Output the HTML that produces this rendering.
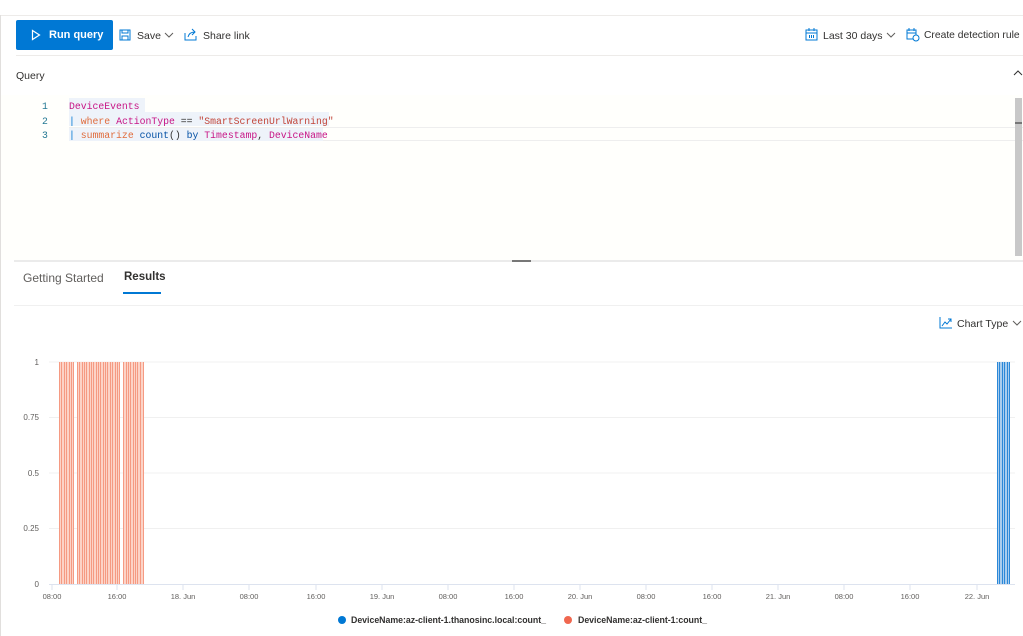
<!DOCTYPE html>
<html><head><meta charset="utf-8"><style>
*{margin:0;padding:0;box-sizing:border-box}
body{width:1023px;height:636px;overflow:hidden;background:#fff;font-family:"Liberation Sans",sans-serif;color:#323130;position:relative}
.a{position:absolute;white-space:nowrap}
.mono{font-family:"Liberation Mono",monospace;font-size:9.8px}
.t{font-size:10.5px;color:#323130}
</style></head><body>
<div class="a" style="left:0;top:15px;width:1023px;height:1px;background:#edebe9"></div>
<div class="a" style="left:0;top:15px;width:1px;height:621px;background:#e1dfdd"></div>
<!-- toolbar -->
<div class="a" style="left:16px;top:20px;width:97px;height:30px;background:#0078d4;border-radius:2px;color:#fff;font-size:11px;font-weight:bold;line-height:31px;padding-left:33px">Run query</div>
<svg class="a" style="left:31px;top:29px" width="10" height="12"><path d="M1.5 1.5 L8.5 6 L1.5 10.5Z" fill="none" stroke="#fff" stroke-width="1.2"/></svg>
<svg class="a" style="left:119px;top:29px" width="12" height="12"><rect x="1" y="1" width="10" height="10" fill="none" stroke="#0078d4"/><rect x="3" y="1" width="6" height="3" fill="none" stroke="#0078d4"/><rect x="3" y="7" width="6" height="4" fill="none" stroke="#0078d4"/></svg>
<div class="a t" style="left:137px;top:30px">Save</div>
<svg class="a" style="left:164px;top:32px" width="10" height="6"><path d="M1 1 L5 5 L9 1" fill="none" stroke="#605e5c"/></svg>
<svg class="a" style="left:184px;top:28px" width="13" height="13"><path d="M1 5 V12 H12 V8" fill="none" stroke="#0078d4"/><path d="M4 9 C5 5 8 4 11 4 M8 1 L11 4 L8 7" fill="none" stroke="#0078d4"/></svg>
<div class="a t" style="left:203px;top:30px">Share link</div>
<svg class="a" style="left:805px;top:28px" width="13" height="13"><rect x="1" y="2" width="11" height="10" fill="none" stroke="#0078d4"/><path d="M1 5 H12 M4 0 V3 M9 0 V3" stroke="#0078d4"/><path d="M4 7h1v3h-1zM6 7h1v3h-1zM8 7h1v3h-1z" fill="#0078d4"/></svg>
<div class="a t" style="left:823px;top:30px">Last 30 days</div>
<svg class="a" style="left:886px;top:32px" width="10" height="6"><path d="M1 1 L5 5 L9 1" fill="none" stroke="#605e5c"/></svg>
<svg class="a" style="left:906px;top:28px" width="14" height="14"><rect x="1" y="2" width="9" height="9" fill="none" stroke="#0078d4"/><path d="M1 5 H10 M3 0 V3 M8 0 V3" stroke="#0078d4"/><circle cx="10" cy="10" r="3" fill="#fff" stroke="#0078d4"/></svg>
<div class="a t" style="left:924px;top:30px;font-size:10.3px">Create detection rule</div>
<div class="a" style="left:16px;top:55px;width:1007px;height:1px;background:#edebe9"></div>
<div class="a t" style="left:16px;top:70px;font-size:10.5px">Query</div>
<svg class="a" style="left:1013px;top:69px" width="10" height="7"><path d="M1 6 L5 2 L9 6" fill="none" stroke="#323130"/></svg>
<!-- editor -->
<div class="a" style="left:1px;top:95px;width:1022px;height:165px;background:#fffffc"></div>
<div class="a" style="left:69px;top:98px;width:76px;height:14px;background:#eef3fa"></div>
<div class="a" style="left:69px;top:112px;width:260px;height:14px;background:#eef3fa"></div>
<div class="a" style="left:69px;top:127px;width:954px;height:14px;border-top:1px solid #eeeeee;border-bottom:1px solid #eeeeee"></div>
<div class="a" style="left:69px;top:128px;width:254px;height:13px;background:#eef3fa"></div>
<div class="a mono" style="left:42px;top:100px;line-height:14.5px;color:#237893">1<br>2<br>3</div>
<div class="a mono" style="left:69px;top:100px;line-height:14.5px;white-space:pre"><span style="color:#c71585">DeviceEvents</span>
<span style="color:#0078d4">|</span> <span style="color:#e06c3c">where</span> <span style="color:#c71585">ActionType</span> == <span style="color:#c2463a">"SmartScreenUrlWarning"</span>
<span style="color:#0078d4">|</span> <span style="color:#e06c3c">summarize</span> <span style="color:#0451a5">count</span>() <span style="color:#0451a5">by</span> <span style="color:#c71585">Timestamp</span>, <span style="color:#c71585">DeviceName</span></div>
<div class="a" style="left:1015px;top:98px;width:7px;height:158px;background:#c8c8c8"></div>
<div class="a" style="left:1015px;top:122px;width:7px;height:2px;background:#777"></div>
<div class="a" style="left:14px;top:260px;width:1009px;height:2px;background:#ebebeb"></div>
<div class="a" style="left:512px;top:260px;width:19px;height:2px;background:#777"></div>
<!-- tabs -->
<div class="a" style="left:23px;top:271px;font-size:12px;color:#605e5c">Getting Started</div>
<div class="a" style="left:124px;top:271px;font-size:11.5px;color:#323130;font-weight:bold">Results</div>
<div class="a" style="left:123px;top:292px;width:38px;height:2px;background:#0078d4"></div>
<div class="a" style="left:14px;top:305px;width:1009px;height:1px;background:#f0f0f0"></div>
<svg class="a" style="left:939px;top:317px" width="13" height="12"><path d="M1 0 V11 H13" fill="none" stroke="#0078d4"/><path d="M3 9 L6 5 L8 7 L12 2 M9 2 H12 V5" fill="none" stroke="#0078d4"/></svg>
<div class="a t" style="left:957px;top:318px">Chart Type</div>
<svg class="a" style="left:1012px;top:320px" width="10" height="6"><path d="M1 1 L5 5 L9 1" fill="none" stroke="#605e5c"/></svg>
<!-- chart -->
<svg class="a" style="left:0;top:340px" width="1023" height="296" font-family="Liberation Sans,sans-serif" font-size="8" fill="#605e5c">
<g stroke="#f0f0f0"><line x1="49" x2="1015" y1="22" y2="22"/><line x1="49" x2="1015" y1="77.5" y2="77.5"/><line x1="49" x2="1015" y1="133" y2="133"/><line x1="49" x2="1015" y1="188.5" y2="188.5"/></g>
<line x1="49" x2="1015" y1="244.5" y2="244.5" stroke="#dde3ef"/>
<g text-anchor="end"><text x="39" y="25">1</text><text x="39" y="80">0.75</text><text x="39" y="136">0.5</text><text x="39" y="191">0.25</text><text x="39" y="247">0</text></g>
<g stroke="#dde3ef"><line x1="52" x2="52" y1="245" y2="250"/><line x1="117" x2="117" y1="245" y2="250"/><line x1="183" x2="183" y1="245" y2="250"/><line x1="249" x2="249" y1="245" y2="250"/><line x1="316" x2="316" y1="245" y2="250"/><line x1="382" x2="382" y1="245" y2="250"/><line x1="448" x2="448" y1="245" y2="250"/><line x1="514" x2="514" y1="245" y2="250"/><line x1="580" x2="580" y1="245" y2="250"/><line x1="646" x2="646" y1="245" y2="250"/><line x1="712" x2="712" y1="245" y2="250"/><line x1="778" x2="778" y1="245" y2="250"/><line x1="844" x2="844" y1="245" y2="250"/><line x1="910" x2="910" y1="245" y2="250"/><line x1="977" x2="977" y1="245" y2="250"/></g>
<g text-anchor="middle" font-size="7.5"><text x="52" y="259">08:00</text><text x="117" y="259">16:00</text><text x="183" y="259">18. Jun</text><text x="249" y="259">08:00</text><text x="316" y="259">16:00</text><text x="382" y="259">19. Jun</text><text x="448" y="259">08:00</text><text x="514" y="259">16:00</text><text x="580" y="259">20. Jun</text><text x="646" y="259">08:00</text><text x="712" y="259">16:00</text><text x="778" y="259">21. Jun</text><text x="844" y="259">08:00</text><text x="910" y="259">16:00</text><text x="977" y="259">22. Jun</text></g>
<g fill="#fcd3c7"><rect x="59" y="22" width="15" height="222"/><rect x="77" y="22" width="43" height="222"/><rect x="123" y="22" width="21" height="222"/></g>
<g stroke="#f59a82" stroke-width="1">
<path d="M59.5 22V244M61.5 22V244M64.5 22V244M66.5 22V244M69.5 22V244M71.5 22V244M73.5 22V244M77.5 22V244M79.5 22V244M82.5 22V244M84.5 22V244M86.5 22V244M89.5 22V244M91.5 22V244M93.5 22V244M96.5 22V244M98.5 22V244M100.5 22V244M103.5 22V244M105.5 22V244M107.5 22V244M110.5 22V244M112.5 22V244M115.5 22V244M117.5 22V244M119.5 22V244M123.5 22V244M126.5 22V244M128.5 22V244M130.5 22V244M133.5 22V244M135.5 22V244M137.5 22V244M140.5 22V244M143.5 22V244"/></g>
<rect x="997" y="22" width="13" height="222" fill="#a9cdee"/>
<path d="M997.5 22V244M999.5 22V244M1002.5 22V244M1004.5 22V244M1007.5 22V244M1009.5 22V244" stroke="#2b88d8"/>
<circle cx="342" cy="280" r="4" fill="#0078d4"/>
<text x="351" y="283" font-size="8.8" font-weight="bold" fill="#323130" textLength="195">DeviceName:az-client-1.thanosinc.local:count_</text>
<circle cx="568" cy="280" r="4" fill="#f0674f"/>
<text x="578" y="283" font-size="8.8" font-weight="bold" fill="#323130" textLength="129">DeviceName:az-client-1:count_</text>
</svg>
</body></html>
